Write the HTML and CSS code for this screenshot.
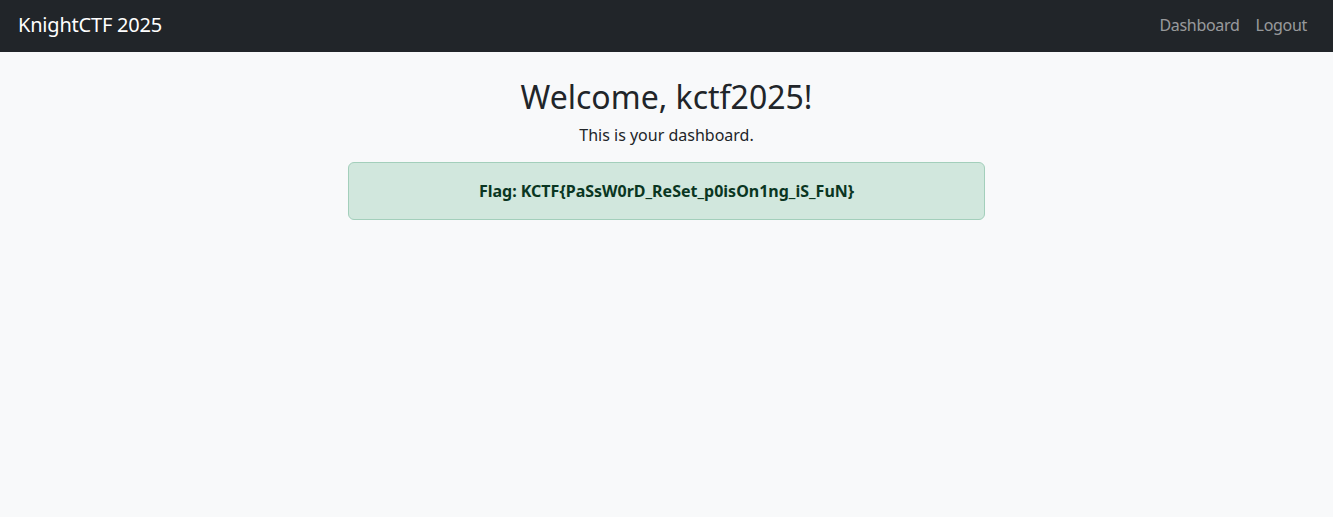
FILE: index.html
```html
<!DOCTYPE html>
<html lang="en">
<head>
<meta charset="utf-8">
<title>Dashboard</title>
<link rel="stylesheet" href="styles.css">
</head>
<body>
<nav class="navbar">
  <a class="brand" href="#">KnightCTF 2025</a>
  <ul class="nav-links">
    <li><a href="#">Dashboard</a></li>
    <li><a href="#">Logout</a></li>
  </ul>
</nav>
<main class="container">
  <h1 class="title">Welcome, kctf2025!</h1>
  <p class="subtitle">This is your dashboard.</p>
  <div class="alert">Flag: KCTF{PaSsW0rD_ReSet_p0isOn1ng_iS_FuN}</div>
</main>
</body>
</html>
```
FILE: styles.css
```css
* { box-sizing: border-box; }
html, body { height: 100%; }
body {
  margin: 0;
  background: #f8f9fa;
  color: #212529;
  font-family: "Noto Sans", "Open Sans", sans-serif;
  font-size: 16px;
  line-height: 1.5;
}
.navbar {
  height: 52px;
  background: #212529;
  display: flex;
  align-items: center;
  justify-content: space-between;
  padding: 0 18px 2px 18px;
}
.brand {
  color: #fff;
  text-decoration: none;
  font-size: 20px;
  letter-spacing: -0.2px;
}
.nav-links {
  list-style: none;
  margin: 0;
  padding: 0;
  display: flex;
}
.nav-links a {
  display: block;
  padding: 8px 8px;
  color: rgba(255,255,255,.55);
  text-decoration: none;
  font-size: 16px;
  letter-spacing: -0.3px;
}
.container {
  max-width: 1320px;
  margin: 0 auto;
  padding: 0 12px;
  text-align: center;
}
.title {
  margin: 26px 0 7px;
  font-size: 32px;
  font-weight: 400;
  line-height: 1.2;
}
.subtitle {
  margin: 0 0 15px;
}
.alert {
  width: 637px;
  margin: 0 auto;
  padding: 16px;
  background: #d1e7dd;
  border: 1px solid #a3cfbb;
  border-radius: 6px;
  color: #0a3622;
  font-weight: 700;
}
```
